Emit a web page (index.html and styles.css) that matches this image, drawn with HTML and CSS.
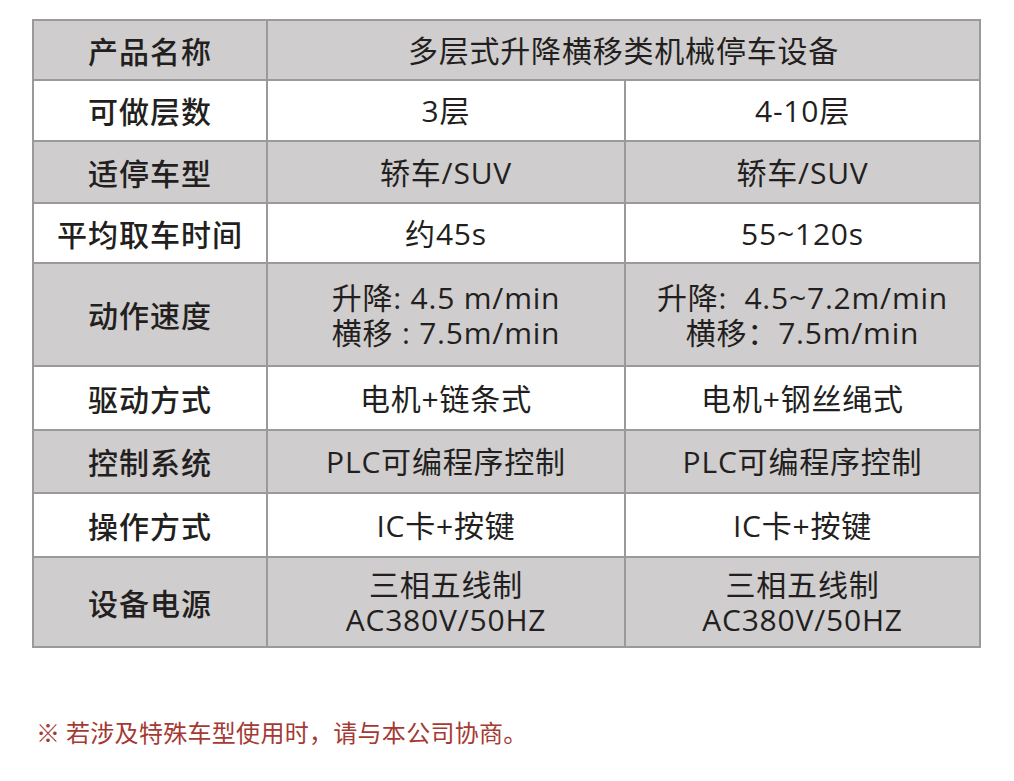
FILE: index.html
```html
<!DOCTYPE html>
<html lang="zh-CN">
<head>
<meta charset="utf-8">
<title>多层式升降横移类机械停车设备</title>
<link rel="stylesheet" href="styles.css">
</head>
<body>
<div class="page">
  <div class="spec">
    <div class="cell label gray r1">产品名称</div>
    <div class="cell gray span r1">多层式升降横移类机械停车设备</div>

    <div class="cell label r2">可做层数</div>
    <div class="cell r2">3层</div>
    <div class="cell r2">4-10层</div>

    <div class="cell label gray r3">适停车型</div>
    <div class="cell gray r3">轿车/SUV</div>
    <div class="cell gray r3">轿车/SUV</div>

    <div class="cell label r4">平均取车时间</div>
    <div class="cell r4">约45s</div>
    <div class="cell r4">55~120s</div>

    <div class="cell label gray r5">动作速度</div>
    <div class="cell gray r5 multi"><span>升降: 4.5 m/min</span><span>横移 : 7.5m/min</span></div>
    <div class="cell gray r5 multi"><span>升降:&nbsp; 4.5~7.2m/min</span><span>横移：7.5m/min</span></div>

    <div class="cell label r6">驱动方式</div>
    <div class="cell r6">电机+链条式</div>
    <div class="cell r6">电机+钢丝绳式</div>

    <div class="cell label gray r7">控制系统</div>
    <div class="cell gray r7">PLC可编程序控制</div>
    <div class="cell gray r7">PLC可编程序控制</div>

    <div class="cell label r8">操作方式</div>
    <div class="cell r8">IC卡+按键</div>
    <div class="cell r8">IC卡+按键</div>

    <div class="cell label gray r9">设备电源</div>
    <div class="cell gray r9 multi"><span>三相五线制</span><span>AC380V/50HZ</span></div>
    <div class="cell gray r9 multi"><span>三相五线制</span><span>AC380V/50HZ</span></div>
  </div>
  <p class="note">※ 若涉及特殊车型使用时，请与本公司协商。</p>
</div>
</body>
</html>
```

FILE: styles.css
```css
html, body {
  margin: 0;
  padding: 0;
  background: #ffffff;
}

body {
  font-family: "Noto Sans CJK SC", "Noto Sans", sans-serif;
  color: #231f20;
}

.page {
  padding: 19px 0 0 32px;
}

.spec {
  display: grid;
  grid-template-columns: 232px 356px 353px;
  grid-template-rows: 58px 59px 60px 58px 101px 62px 61px 62px 88px;
  gap: 2px;
  padding: 2px;
  background: #9a9a9a;
  width: max-content;
}

.cell {
  background: #ffffff;
  display: flex;
  align-items: center;
  justify-content: center;
  font-family: "Open Sans", "Noto Sans CJK SC", sans-serif;
  font-size: 30px;
  line-height: 35px;
  letter-spacing: 0.8px;
  white-space: nowrap;
}

.cell.gray {
  background: #cfcdcd;
}

.cell.label {
  font-family: "Noto Sans CJK SC", sans-serif;
  font-weight: 500;
  letter-spacing: 1px;
}

.cell.span {
  grid-column: 2 / 4;
}

.cell.multi {
  flex-direction: column;
}

.cell.multi span {
  display: block;
}

.note {
  margin: 68px 0 0 4px;
  font-size: 24px;
  line-height: 32px;
  letter-spacing: 0.3px;
  color: #a43a33;
}
```
